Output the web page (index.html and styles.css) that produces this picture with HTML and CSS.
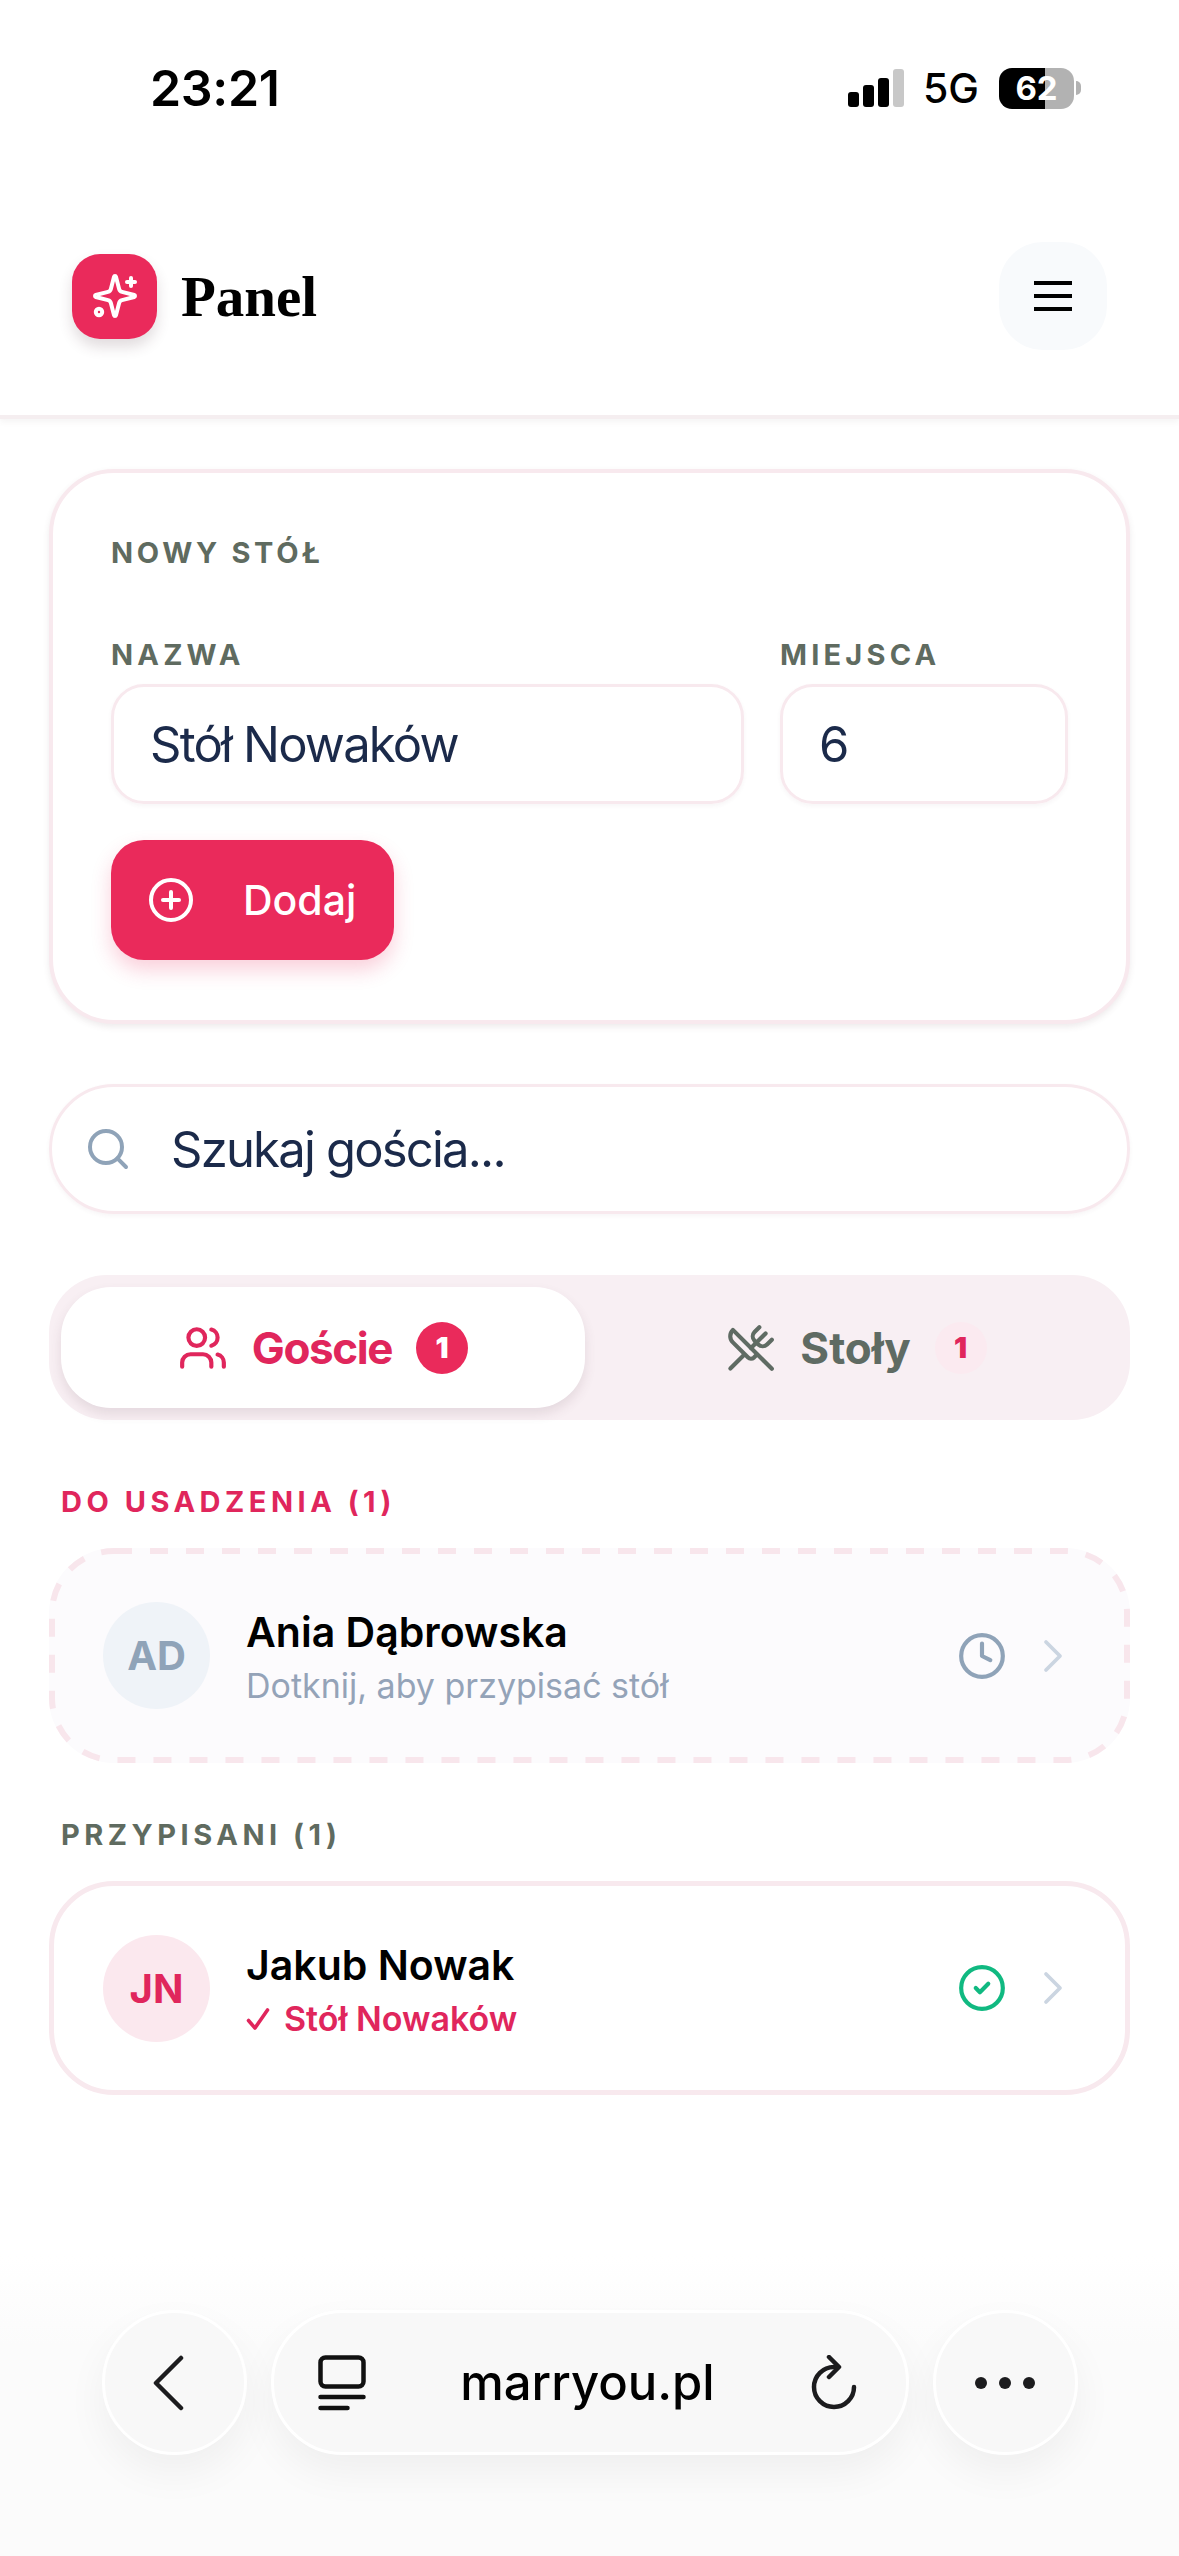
FILE: index.html
```html
<!DOCTYPE html>
<html lang="pl">
<head>
  <meta charset="UTF-8">
  <title>Panel</title>
  <link rel="stylesheet" href="styles.css">
</head>
<body>
  <header class="top">
    <div class="status">
      <span class="clock">23:21</span>
      <div class="status-right">
        <div class="signal"><i></i><i></i><i></i><i class="off"></i></div>
        <span class="net">5G</span>
        <div class="battery"><span>62</span></div>
        <div class="battery-tip"></div>
      </div>
    </div>
    <div class="nav">
      <div class="logo">
        <svg width="48" height="48" viewBox="0 0 24 24" fill="none" stroke="#fff" stroke-width="2" stroke-linecap="round" stroke-linejoin="round"><path d="M9.937 15.5A2 2 0 0 0 8.5 14.063l-6.135-1.582a.5.5 0 0 1 0-.962L8.5 9.936A2 2 0 0 0 9.937 8.5l1.582-6.135a.5.5 0 0 1 .963 0L14.063 8.5A2 2 0 0 0 15.5 9.937l6.135 1.581a.5.5 0 0 1 0 .964L15.5 14.063a2 2 0 0 0-1.437 1.437l-1.582 6.135a.5.5 0 0 1-.963 0z"/><path d="M20 3v4"/><path d="M22 5h-4"/><circle cx="4" cy="20" r="1.6"/></svg>
      </div>
      <div class="brand">Panel</div>
      <div class="menu-btn">
        <svg width="38" height="32" viewBox="0 0 38 32" fill="none" stroke="#000" stroke-width="4"><path d="M0 3h38M0 16h38M0 29h38"/></svg>
      </div>
    </div>
  </header>

  <main class="content">
    <section class="card new-table">
      <h2 class="caps">NOWY STÓŁ</h2>
      <div class="fields">
        <div class="field grow">
          <label class="caps">NAZWA</label>
          <div class="input">Stół Nowaków</div>
        </div>
        <div class="field small">
          <label class="caps">MIEJSCA</label>
          <div class="input">6</div>
        </div>
      </div>
      <button class="add">
        <svg width="48" height="48" viewBox="0 0 24 24" fill="none" stroke="#fff" stroke-width="2" stroke-linecap="round" stroke-linejoin="round"><circle cx="12" cy="12" r="10"/><path d="M8 12h8"/><path d="M12 8v8"/></svg>
        Dodaj
      </button>
    </section>

    <div class="search">
      <svg width="48" height="48" viewBox="0 0 24 24" fill="none" stroke="#8fa3b8" stroke-width="2" stroke-linecap="round" stroke-linejoin="round"><circle cx="11" cy="11" r="8"/><path d="m21 21-4.3-4.3"/></svg>
      <span>Szukaj gościa...</span>
    </div>

    <div class="tabs">
      <div class="tab active">
        <svg width="50" height="50" viewBox="0 0 24 24" fill="none" stroke="#e0265c" stroke-width="2" stroke-linecap="round" stroke-linejoin="round"><path d="M16 21v-2a4 4 0 0 0-4-4H6a4 4 0 0 0-4 4v2"/><circle cx="9" cy="7" r="4"/><path d="M22 21v-2a4 4 0 0 0-3-3.87"/><path d="M16 3.13a4 4 0 0 1 0 7.75"/></svg>
        <span>Goście</span>
        <b class="badge">1</b>
      </div>
      <div class="tab">
        <svg width="50" height="50" viewBox="0 0 24 24" fill="none" stroke="#5f6b63" stroke-width="2" stroke-linecap="round" stroke-linejoin="round"><path d="m16 2-2.3 2.3a3 3 0 0 0 0 4.2l1.8 1.8a3 3 0 0 0 4.2 0L22 8"/><path d="M15 15 3.3 3.3a4.2 4.2 0 0 0 0 6l7.3 7.3c.7.7 2 .7 2.8 0L15 15Zm0 0 7 7"/><path d="m2.1 21.8 6.4-6.3"/><path d="m19 5-7 7"/></svg>
        <span>Stoły</span>
        <b class="badge soft">1</b>
      </div>
    </div>

    <h3 class="caps group pink">DO USADZENIA (1)</h3>
    <div class="guest pending">
      <svg class="dashes" width="1081" height="215" fill="none"><rect x="3" y="3" width="1075" height="209" rx="62" stroke="#f8e6ec" stroke-width="6" stroke-dasharray="18 18"/></svg>
      <div class="avatar grey">AD</div>
      <div class="info">
        <div class="name">Ania Dąbrowska</div>
        <div class="sub">Dotknij, aby przypisać stół</div>
      </div>
      <svg class="state" width="50" height="50" viewBox="0 0 24 24" fill="none" stroke="#8fa3b8" stroke-width="2" stroke-linecap="round" stroke-linejoin="round"><circle cx="12" cy="12" r="10"/><path d="M12 6v6l4 2"/></svg>
      <svg class="chev" width="56" height="56" viewBox="0 0 24 24" fill="none" stroke="#cbd5e1" stroke-width="1.6" stroke-linecap="round" stroke-linejoin="round"><path d="m9 18 6-6-6-6"/></svg>
    </div>

    <h3 class="caps group">PRZYPISANI (1)</h3>
    <div class="guest">
      <div class="avatar rose">JN</div>
      <div class="info">
        <div class="name">Jakub Nowak</div>
        <div class="sub assigned">
          <svg width="24" height="24" viewBox="0 0 24 24" fill="none" stroke="#e0265c" stroke-width="3.6" stroke-linecap="round" stroke-linejoin="round"><path d="M2.5 13.5 9 21 21.5 3"/></svg>
          <span>Stół Nowaków</span>
        </div>
      </div>
      <svg class="state" width="50" height="50" viewBox="0 0 24 24" fill="none" stroke="#10b981" stroke-width="2" stroke-linecap="round" stroke-linejoin="round"><circle cx="12" cy="12" r="10"/><path d="m9 12 2 2 4-4"/></svg>
      <svg class="chev" width="56" height="56" viewBox="0 0 24 24" fill="none" stroke="#cbd5e1" stroke-width="1.6" stroke-linecap="round" stroke-linejoin="round"><path d="m9 18 6-6-6-6"/></svg>
    </div>
  </main>

  <footer class="browser">
    <div class="round-btn back">
      <svg width="36" height="56" viewBox="0 0 36 56" fill="none" stroke="#1c1c1e" stroke-width="4.5" stroke-linecap="round" stroke-linejoin="round"><path d="M31 3 6 28l25 25"/></svg>
    </div>
    <div class="address">
      <svg width="48" height="56" viewBox="0 0 48 56" fill="none" stroke="#111" stroke-width="4.5" stroke-linecap="round"><rect x="2.5" y="2.5" width="43" height="29" rx="5"/><path d="M2.5 42h43M2.5 53h27"/></svg>
      <span>marryou.pl</span>
      <svg width="50" height="56" viewBox="0 0 50 56" fill="none" stroke="#1c1c1e" stroke-width="4.5" stroke-linecap="round" stroke-linejoin="round"><path d="M25 12a20 20 0 1 0 20 20"/><path d="M20 2l10 10-10 10"/></svg>
    </div>
    <div class="round-btn">
      <svg width="62" height="14" viewBox="0 0 62 14" fill="#1c1c1e"><circle cx="7" cy="7" r="6"/><circle cx="31" cy="7" r="6"/><circle cx="55" cy="7" r="6"/></svg>
    </div>
  </footer>
</body>
</html>
```

FILE: styles.css
```css
* {
  box-sizing: border-box;
}

html,
body {
  margin: 0;
  height: 2556px;
}

body {
  position: relative;
  overflow: hidden;
  background: #fff;
  font-family: Inter, "Liberation Sans", sans-serif;
  color: #000;
}

.top {
  height: 419px;
  border-bottom: 4px solid #f5eef0;
  box-shadow: 0 3px 6px rgba(90, 60, 70, 0.06);
}

.status {
  display: flex;
  justify-content: space-between;
  align-items: center;
  height: 132px;
  padding: 44px 98px 0 150px;
}

.clock {
  font-size: 50px;
  font-weight: 600;
  letter-spacing: -0.3px;
}

.status-right {
  display: flex;
  align-items: center;
}

.signal {
  display: flex;
  align-items: flex-end;
  gap: 4px;
  height: 38px;
  margin-right: 19px;
}

.signal i {
  display: block;
  width: 11px;
  border-radius: 3px;
  background: #000;
}

.signal i:nth-child(1) { height: 15px; }
.signal i:nth-child(2) { height: 22px; }
.signal i:nth-child(3) { height: 29px; }
.signal i:nth-child(4) { height: 38px; }
.signal i.off { background: #c8c8c8; }

.net {
  font-size: 41px;
  font-weight: 500;
  margin-right: 20px;
}

.battery {
  display: flex;
  align-items: center;
  justify-content: center;
  width: 75px;
  height: 41px;
  border-radius: 13px;
  background: linear-gradient(to right, #000 62%, #b2b2b2 62%);
  color: #fff;
  font-size: 33px;
  font-weight: 700;
}

.battery-tip {
  width: 5px;
  height: 14px;
  margin-left: 2px;
  border-radius: 0 7px 7px 0;
  background: #b2b2b2;
}

.nav {
  display: flex;
  align-items: center;
  padding: 110px 72px 0;
}

.logo {
  display: flex;
  align-items: center;
  justify-content: center;
  width: 85px;
  height: 85px;
  border-radius: 28px;
  background: #ea2a5b;
  box-shadow: 0 8px 14px rgba(70, 40, 50, 0.16);
}

.brand {
  margin-left: 24px;
  font-family: "Liberation Serif", serif;
  font-size: 57px;
  font-weight: 700;
}

.menu-btn {
  display: flex;
  align-items: center;
  justify-content: center;
  width: 108px;
  height: 108px;
  margin-left: auto;
  border-radius: 44px;
  background: #f8fafc;
}

.content {
  padding: 50px 49px 0;
}

.caps {
  margin: 0;
  font-size: 29px;
  font-weight: 700;
  letter-spacing: 3.7px;
  color: #5f6b60;
}

.card {
  height: 555px;
  padding: 62px 58px 0;
  border: 4px solid #f8e9ee;
  border-radius: 65px;
  background: #fff;
  box-shadow: 0 3px 6px rgba(90, 60, 70, 0.1);
}

.fields {
  display: flex;
  gap: 36px;
  margin-top: 67px;
}

.field label {
  display: block;
  margin-bottom: 12px;
  letter-spacing: 4.2px;
}

.grow {
  flex: 1;
}

.small {
  width: 288px;
}

.input {
  height: 120px;
  padding-left: 36px;
  border: 3px solid #f8e9ee;
  border-radius: 33px;
  box-shadow: 0 2px 4px rgba(90, 60, 70, 0.05);
  font-size: 49px;
  letter-spacing: -1.8px;
  line-height: 116px;
  color: #1b2a4a;
}

.add {
  display: flex;
  align-items: center;
  gap: 48px;
  width: 283px;
  height: 120px;
  margin-top: 36px;
  padding: 0 0 0 36px;
  border: none;
  border-radius: 33px;
  background: #ea2a5b;
  box-shadow: 0 10px 20px rgba(234, 42, 91, 0.22);
  color: #fff;
  font-family: inherit;
  font-size: 41px;
  font-weight: 500;
}

.search {
  display: flex;
  align-items: center;
  gap: 39px;
  height: 130px;
  margin-top: 60px;
  padding-left: 32px;
  border: 3px solid #f8e9ee;
  border-radius: 65px;
  box-shadow: 0 2px 4px rgba(90, 60, 70, 0.05);
  font-size: 49px;
  letter-spacing: -1.8px;
  color: #1b2a4a;
}

.tabs {
  display: flex;
  height: 145px;
  margin-top: 61px;
  padding: 12px;
  border-radius: 58px;
  background: #f8eff3;
}

.tab {
  display: flex;
  flex: 1;
  align-items: center;
  justify-content: center;
  gap: 24px;
  padding-left: 10px;
  font-size: 44px;
  font-weight: 700;
  color: #5f6b63;
}

.tab.active {
  flex: 0 0 524px;
  padding-left: 0;
  border-radius: 50px;
  background: #fff;
  box-shadow: 0 6px 12px rgba(90, 60, 70, 0.12);
  letter-spacing: -1.4px;
  color: #e0265c;
}

.badge {
  display: flex;
  align-items: center;
  justify-content: center;
  width: 52px;
  height: 52px;
  border-radius: 50%;
  background: #ea2a5b;
  color: #fff;
  font-size: 29px;
  letter-spacing: 0;
}

.badge.soft {
  background: #fbeaf0;
  color: #e0265c;
}

.group {
  margin: 64px 0 29px 12px;
  line-height: 35px;
  letter-spacing: 4.5px;
}

.group.pink {
  color: #e0265c;
}

.guest {
  display: flex;
  align-items: center;
  height: 214px;
  padding: 0 44px 0 49px;
  border: 5px solid #f8e9ee;
  border-radius: 65px;
  background: #fff;
}

.guest.pending {
  position: relative;
  height: 215px;
  padding: 0 49px 0 54px;
  border: none;
  background: #fcfbfd;
}

.dashes {
  position: absolute;
  top: 0;
  left: 0;
}

.guest + .group {
  margin-top: 54px;
}

.avatar {
  display: flex;
  align-items: center;
  justify-content: center;
  width: 107px;
  height: 107px;
  flex: none;
  border-radius: 50%;
  font-size: 40px;
  font-weight: 700;
}

.avatar.grey {
  background: #eff3f8;
  color: #8fa3b8;
}

.avatar.rose {
  background: #fbe8ee;
  color: #e0265c;
}

.info {
  flex: 1;
  margin-left: 36px;
  padding-top: 4px;
}

.name {
  font-size: 41px;
  font-weight: 600;
  line-height: 50px;
}

.sub {
  margin-top: 7px;
  font-size: 34px;
  line-height: 44px;
  color: #94a3b8;
}

.sub.assigned {
  display: flex;
  align-items: center;
  gap: 14px;
  font-weight: 600;
  color: #e0265c;
}

.chev {
  margin-left: 18px;
}

.browser {
  position: absolute;
  left: 0;
  right: 0;
  bottom: 0;
  display: flex;
  justify-content: center;
  gap: 24px;
  height: 300px;
  padding-top: 54px;
  background: linear-gradient(to bottom, rgba(250, 250, 250, 0), #fbfbfb 30%);
}

.round-btn {
  display: flex;
  align-items: center;
  justify-content: center;
  width: 145px;
  height: 145px;
  border: 3px solid #fff;
  border-radius: 50%;
  background: #f8f8f8;
  box-shadow: 0 18px 40px rgba(0, 0, 0, 0.05);
}

.round-btn.back {
  padding-right: 12px;
}

.address {
  display: flex;
  align-items: center;
  justify-content: space-between;
  width: 638px;
  height: 145px;
  padding: 0 46px 0 44px;
  border: 3px solid #fff;
  border-radius: 72px;
  background: #f8f8f8;
  box-shadow: 0 18px 40px rgba(0, 0, 0, 0.05);
  font-size: 49px;
  font-weight: 500;
}
```
